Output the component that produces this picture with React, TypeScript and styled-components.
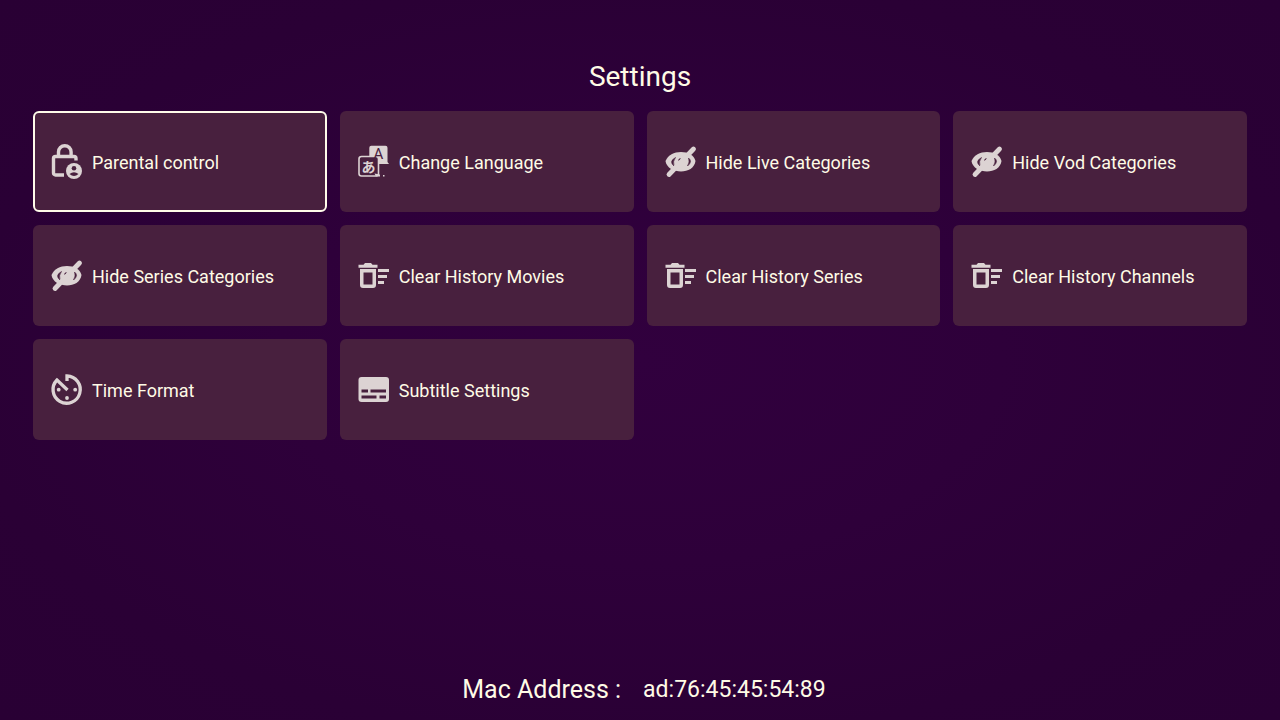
import React from 'react';
import styled, { createGlobalStyle } from 'styled-components';

const GlobalStyle = createGlobalStyle`
  *, *::before, *::after { box-sizing: border-box; }
  body {
    margin: 0;
    background: #2a0035;
    color: #fffbe6;
    font-family: Roboto, "Liberation Sans", sans-serif;
  }
`;

const Page = styled.main`
  min-height: 100vh;
  display: flex;
  flex-direction: column;
  padding: 58px 33px 14px;
  background: radial-gradient(ellipse at 50% 50%, #31003e 0%, #2e003a 40%, #2a0035 75%, #290034 100%);
`;

const Title = styled.h1`
  margin: 0 0 15px;
  text-align: center;
  font-size: 28px;
  line-height: 38px;
  font-weight: 400;
`;

const Grid = styled.div`
  display: grid;
  grid-template-columns: repeat(4, 1fr);
  gap: 13px;
`;

const Card = styled.button<{ $selected?: boolean }>`
  display: flex;
  align-items: center;
  gap: 7px;
  height: 101px;
  padding: 0 14px;
  border: 2px solid ${({ $selected }) => ($selected ? '#fffbe9' : 'transparent')};
  border-radius: 6px;
  background: #48203e;
  color: inherit;
  font: inherit;
  font-size: 18px;
  line-height: 24px;
  text-align: left;
  cursor: pointer;
`;

const IconBox = styled.svg`
  width: 36px;
  height: 36px;
  flex: none;
  color: #dcd3d3;
`;

const CardLabel = styled.span`
  padding-top: 2px;
`;

const Footer = styled.footer`
  display: flex;
  justify-content: center;
  gap: 22px;
  margin-top: auto;
  padding-left: 8px;
  font-size: 25px;
  line-height: 32px;
`;

const Address = styled.span`
  font-size: 23px;
`;

type IconName = 'lock' | 'language' | 'hide' | 'clear' | 'time' | 'subtitle';

const drawings: Record<IconName, React.ReactNode> = {
  lock: (
    <>
      <path d="M9.500 12V8a6.300 6.300 0 0 1 12.600 0v4M15 31H6.500a2 2 0 0 1-2-2V14.500a2 2 0 0 1 2-2h18.500a2 2 0 0 1 2 2v2" fill="none" stroke="currentColor" strokeWidth="3.4" />
      <circle cx="25" cy="27" r="8" fill="currentColor" />
      <circle cx="25" cy="24.300" r="2.300" fill="#48203e" />
      <path d="M20.500 30q4.500-3.500 9 0q-4.500 4-9 0" fill="#48203e" />
    </>
  ),
  language: (
    <>
      <path d="M15.300 1.700H29.500q2 0 2 2V18l1.500 2H13.300V3.700q0-2 2-2z" fill="currentColor" />
      <rect x="3" y="12.500" width="19.500" height="19.500" rx="2.500" fill="#48203e" stroke="currentColor" strokeWidth="1.600" />
      <text x="22.300" y="15" fontSize="15" textAnchor="middle" fill="#48203e">A</text>
      <text x="12.400" y="27.500" fontSize="14" fontWeight="700" fontFamily="Noto Sans CJK JP, sans-serif" textAnchor="middle" fill="currentColor">あ</text>
      <path d="M18.500 29.500l5.500 1v2h-4zM27 31h1.500v1.500h-1.500z" fill="currentColor" />
    </>
  ),
  hide: (
    <>
      <path d="M2.500 17C5 11 11 8 18 8s13 3 14.500 9c-1 7-7.500 10.500-14.500 10.500S3.500 24 2.500 17z" fill="currentColor" />
      <path d="M12.500 13.500q-7 4 -1.500 8.500q-1.500-4.500 1.500-8.500M25.500 14q4.500 3.500-1 8q2.500-4 1-8" fill="#48203e" stroke="#48203e" strokeWidth=".6" />
      <path d="M15.500 16.500l2-2" stroke="#48203e" strokeWidth="1.200" />
      <path d="M6 30.500L30.500 5" stroke="currentColor" strokeWidth="4.800" strokeLinecap="round" />
    </>
  ),
  clear: (
    <>
      <path d="M2.500 6.700h5L9 5h6l1.500 1.700h5v3H2.500z" fill="currentColor" />
      <path fillRule="evenodd" d="M4 11h16V27q0 3-3 3H7q-3 0-3-3zM7.500 14.500v12h9v-12z" fill="currentColor" />
      <path d="M22 11h11v3H22zM22 17h9v3H22zM22 23h6v3h-6z" fill="currentColor" />
    </>
  ),
  time: (
    <>
      <path d="M18 9V4A13.600 13.600 0 1 1 8 8L18.500 18" fill="none" stroke="currentColor" strokeWidth="3.300" />
      <circle cx="9.700" cy="17.700" r="1.900" fill="currentColor" />
      <circle cx="26.200" cy="17.700" r="1.900" fill="currentColor" />
      <circle cx="18" cy="26" r="1.900" fill="currentColor" />
    </>
  ),
  subtitle: (
    <>
      <rect x="2.500" y="5" width="30.500" height="25" rx="3" fill="currentColor" />
      <path d="M5.500 17.500h6.500v3H5.500zM14.500 17.500H30v3H14.500zM5.500 23.500h15v3h-15zM23.500 23.500H30v3h-6.500z" fill="#48203e" />
    </>
  ),
};

const items: { icon: IconName; label: string }[] = [
  { icon: 'lock', label: 'Parental control' },
  { icon: 'language', label: 'Change Language' },
  { icon: 'hide', label: 'Hide Live Categories' },
  { icon: 'hide', label: 'Hide Vod Categories' },
  { icon: 'hide', label: 'Hide Series Categories' },
  { icon: 'clear', label: 'Clear History Movies' },
  { icon: 'clear', label: 'Clear History Series' },
  { icon: 'clear', label: 'Clear History Channels' },
  { icon: 'time', label: 'Time Format' },
  { icon: 'subtitle', label: 'Subtitle Settings' },
];

export default function App() {
  return (
    <Page>
      <GlobalStyle />
      <Title>Settings</Title>
      <Grid>
        {items.map(({ icon, label }, i) => (
          <Card key={label} type="button" $selected={i === 0}>
            <IconBox viewBox="0 0 36 36" aria-hidden="true">{drawings[icon]}</IconBox>
            <CardLabel>{label}</CardLabel>
          </Card>
        ))}
      </Grid>
      <Footer>
        <span>Mac Address :</span>
        <Address>ad:76:45:45:54:89</Address>
      </Footer>
    </Page>
  );
}
